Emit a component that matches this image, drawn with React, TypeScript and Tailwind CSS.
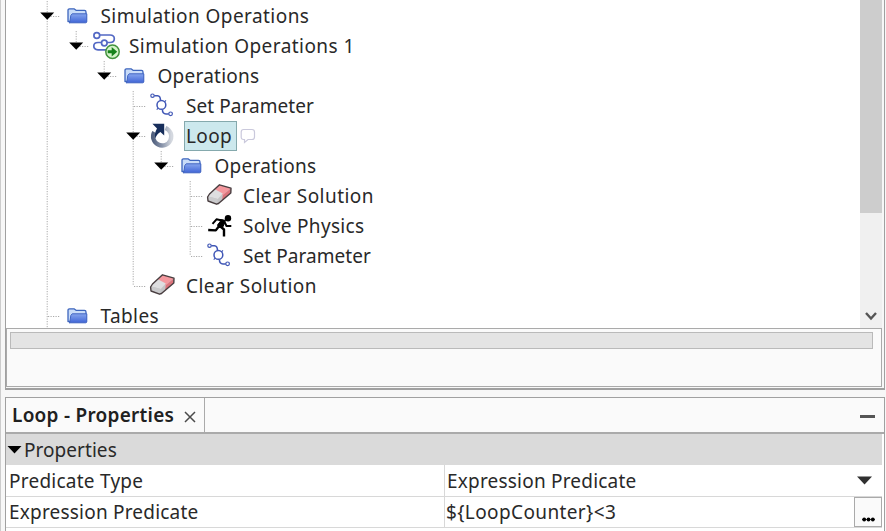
import React from "react";

type Guide = " " | "|" | "+" | "L";
type IconName = "folder" | "sim" | "param" | "loop" | "eraser" | "run";
type Item = { guides: Guide[]; open?: boolean; icon: IconName; label: string; tracking: string; selected?: boolean };

const items: Item[] = [
  { guides: ["+"], open: true, icon: "folder", label: "Simulation Operations", tracking: "tracking-[0.43px]" },
  { guides: ["|", "L"], open: true, icon: "sim", label: "Simulation Operations 1", tracking: "tracking-[0.44px]" },
  { guides: ["|", " ", "L"], open: true, icon: "folder", label: "Operations", tracking: "tracking-[0.24px]" },
  { guides: ["|", " ", " ", "+"], icon: "param", label: "Set Parameter", tracking: "tracking-[0.06px]" },
  { guides: ["|", " ", " ", "+"], open: true, icon: "loop", label: "Loop", tracking: "tracking-[0.35px]", selected: true },
  { guides: ["|", " ", " ", "|", "L"], open: true, icon: "folder", label: "Operations", tracking: "tracking-[0.24px]" },
  { guides: ["|", " ", " ", "|", " ", "+"], icon: "eraser", label: "Clear Solution", tracking: "tracking-[0.45px]" },
  { guides: ["|", " ", " ", "|", " ", "+"], icon: "run", label: "Solve Physics", tracking: "tracking-[0.32px]" },
  { guides: ["|", " ", " ", "|", " ", "L"], icon: "param", label: "Set Parameter", tracking: "tracking-[0.06px]" },
  { guides: ["|", " ", " ", "L"], icon: "eraser", label: "Clear Solution", tracking: "tracking-[0.45px]" },
  { guides: ["+"], icon: "folder", label: "Tables", tracking: "tracking-[0.4px]" },
];

function GuideCell({ kind, open }: { kind: Guide; open: boolean }) {
  return (
    <svg className="h-[30px] w-[28.5px] shrink-0" viewBox="0 0 28.5 30" fill="none" stroke="#aaaaaa" strokeDasharray="1.2 1.3">
      {kind !== " " && <path d={kind === "L" ? "M15.2 0V15" : "M15.2 0V30"} />}
      {(kind === "+" || kind === "L") && <path d="M16 15.5H28.5" />}
      {open && <path d="M8.2 11.5H22.2L15.2 18.8Z" fill="#000" stroke="none" />}
    </svg>
  );
}

function Icon({ name }: { name: IconName }) {
  const box = "h-[30px] w-[31px] shrink-0 overflow-visible";
  switch (name) {
    case "folder":
      return (
        <svg className={box} viewBox="0 0 31 30" strokeLinejoin="round">
          <defs>
            <linearGradient id="fold" x2="0" y2="1"><stop stopColor="#86a5ee" /><stop offset="1" stopColor="#4065d6" /></linearGradient>
          </defs>
          <path d="M7 20.5V9.3Q7 7.8 8.5 7.8H13L15 9.3H23.5Q25 9.3 25 11V20.5Z" fill="#c9dcf8" stroke="#3d65bd" strokeWidth="1.3" />
          <path d="M8.8 21.5L9.8 14.5L11.2 12.8H25.8V20.5Q25.8 21.8 24.6 21.8H8Z" fill="url(#fold)" stroke="#4265c2" />
        </svg>
      );
    case "sim":
      return (
        <svg className={box} viewBox="0 0 31 30" fill="none">
          <g stroke="#5368c4" strokeWidth="1.7">
            <path d="M10.5 4H21Q25.3 4 25.3 7.7T21 11.5H9Q4.8 11.5 4.8 15T9 18.8H17" />
            <circle cx="7.8" cy="4.5" r="2.9" fill="white" /><circle cx="15.3" cy="12" r="2.8" fill="white" />
          </g>
          <circle cx="23.5" cy="20.8" r="6.7" fill="#d4f3c9" stroke="#43933e" strokeWidth="1.5" />
          <path d="M18.7 19.3H22.7V15.9L28.2 20.8L22.7 25.5V22.3H18.7Z" fill="#16821b" />
        </svg>
      );
    case "param":
      return (
        <svg className={box} viewBox="0 0 31 30" fill="none" stroke="#4057b6" strokeWidth="1.5">
          <circle cx="6.5" cy="4.7" r="1.7" strokeWidth="1.2" /><circle cx="24.6" cy="22.8" r="1.8" strokeWidth="1.2" />
          <path d="M8.3 4.7H11.5Q14.6 5 14.4 9.5M22.8 23H20Q16.4 22.8 16.4 18.5" />
          <circle cx="15.4" cy="13.9" r="4.4" />
          <path d="M18.5 10.8L20 9.3M12.2 17.2L10.7 18.7" strokeWidth="1.1" />
        </svg>
      );
    case "loop":
      return (
        <svg className={box} viewBox="0 0 31 30" fill="none">
          <defs><linearGradient id="ring"><stop stopColor="#52617f" /><stop offset=".5" stopColor="#8a95ab" /><stop offset="1" stopColor="#d4d8df" /></linearGradient></defs>
          <path d="M8.2 11A9.1 9.1 0 1 0 19.5 6.9" stroke="url(#ring)" strokeWidth="4.3" />
          <path d="M6.4 2.8H18.2V14.6L14.4 11Q10.5 13 9.4 17.5Q8 12.5 11 7.5Z" fill="#172e5b" />
        </svg>
      );
    case "eraser":
      return (
        <svg className={box} viewBox="0 0 31 30" strokeLinejoin="round">
          <path d="M4.6 16L6.5 13L16.5 3.8L28 7.2L27.8 12L15.5 22.5L13.5 23.2L5 20Z" fill="#c4c4c6" />
          <path d="M11.8 8.2L16.6 4L27.7 7.3L19.8 14.3Z" fill="#f4989e" />
          <path d="M19.8 14.3L27.8 7.5L27.6 12L19 19.2Z" fill="#dc737b" />
          <path d="M4.8 15.3L11.8 8.2L19.8 12.5L14.8 18Z" fill="#dedee0" />
          <path d="M4.8 15.3L14.8 18L14 23L5 20Z" fill="#cacacc" />
          <path d="M4.6 16L6.5 13L16.5 3.8L28 7.2L27.8 12L15.5 22.5L13.5 23.2L5 20Z" fill="none" stroke="#493e40" strokeWidth="1.4" />
        </svg>
      );
    case "run":
      return (
        <svg className={box} viewBox="0 0 31 30" fill="none" stroke="#000" strokeLinejoin="round">
          <circle cx="25" cy="7.3" r="3.2" fill="#000" stroke="none" />
          <path d="M16.5 8.5L22.5 9.3L20 15.8L16 16.5L14.5 14L18 9.5Z" fill="#000" />
          <path d="M20 9.7L13.5 8.3L9.5 12.8M21.5 11L23.5 15H28.3" strokeWidth="2" />
          <path d="M16.5 14.5L12.8 19.4L5.2 19M17.5 15.5L21 18.5V25.5" strokeWidth="2.4" />
        </svg>
      );
  }
}

function Label({ text, tracking }: { text: string; tracking: string }) {
  return <span className={`block whitespace-pre text-[19px] leading-[30px] text-[#292929] ${tracking}`}>{text}</span>;
}

function TreeRow({ item }: { item: Item }) {
  return (
    <div className="flex h-[30px] shrink-0 items-center pl-[26px]">
      {item.guides.map((kind, i) => <GuideCell key={i} kind={kind} open={!!item.open && i === item.guides.length - 1} />)}
      <Icon name={item.icon} />
      {item.selected ? (
        <>
          <div className="ml-[7px] flex h-[30px] w-[53px] items-center border border-[#85a9ad] bg-[#cce8ed] pl-px"><Label text={item.label} tracking={item.tracking} /></div>
          <svg className="ml-[3px] h-[30px] w-[18px]" viewBox="0 0 18 30" fill="none" stroke="#cac9dc" strokeWidth="1.2"><path d="M3.5 8.5H12Q14.5 8.5 14.5 11V16Q14.5 18.5 12 18.5H8L4.5 21.5V18.5H3.5Q1.2 18.5 1.2 16V11Q1.2 8.5 3.5 8.5Z" /></svg>
        </>
      ) : <div className="ml-[9px]"><Label text={item.label} tracking={item.tracking} /></div>}
    </div>
  );
}

export default function App() {
  return (
    <div className="flex h-[531px] w-[886px] flex-col overflow-hidden border-l border-[#cccccc] bg-[#f7f7f7] pl-1 font-['Noto_Sans',sans-serif]">
      <section className="flex h-[390px] w-[880px] shrink-0 flex-col border-x border-b-2 border-[#a0a0a0] bg-[#f7f7f7]">
        <div className="flex h-[328px] shrink-0">
          <div className="flex h-[328px] flex-1 flex-col overflow-hidden bg-white pt-px">
            {items.map((item, i) => <TreeRow key={i} item={item} />)}
          </div>
          <div className="flex w-[22px] flex-col bg-[#f0f0f0]">
            <div className="h-[213px] bg-[#cdcdcd]" />
            <div className="flex flex-1 items-end justify-center pb-[7px]">
              <svg width="12" height="10" viewBox="0 0 12 10" fill="none" stroke="#555" strokeWidth="2.4"><path d="M1 2L6 7.5L11 2" /></svg>
            </div>
          </div>
          <div className="w-[2px] bg-[#f7f7f7]" />
        </div>
        <div className="h-[59px] w-[876px] border border-[#aaaaaa] bg-[#fafafa] px-[3px] pt-[3px]">
          <div className="h-[17px] w-[863px] border border-[#bababa] bg-[#e4e4e4]" />
        </div>
      </section>
      <section className="mt-[7px] flex h-[134px] w-[880px] shrink-0 flex-col border-x border-t border-[#a0a0a0] bg-white">
        <header className="flex h-[36px] shrink-0 items-center justify-between border-b-2 border-[#aaaaaa] bg-[#fafafa] pr-[9px]">
          <div className="flex h-full w-[199px] items-center border-r border-[#aaaaaa] pl-[6px]">
            <span className="w-[162px] whitespace-pre text-[19px] font-semibold leading-[30px] tracking-[0.26px] text-[#202020]">Loop - Properties</span>
            <svg className="ml-[10px] mt-1" width="12" height="12" viewBox="0 0 12 12" stroke="#4a4a4a" strokeWidth="1.5"><path d="M1 1L11 11M11 1L1 11" /></svg>
          </div>
          <div className="mt-[3px] h-[3px] w-[15px] bg-[#555]" />
        </header>
        <div className="mr-[2px] flex h-[31px] shrink-0 items-center bg-[#dadada] pl-[1px]">
          <svg width="15" height="9" viewBox="0 0 15 9"><path d="M0.5 1H14.5L7.5 8.5Z" /></svg>
          <div className="ml-[2px]"><Label text="Properties" tracking="tracking-[0.05px]" /></div>
        </div>
        <div className="mr-[2px] flex h-[32px] shrink-0 border-b border-[#d8d8d8]">
          <div className="flex w-[439px] items-center border-r border-[#d8d8d8] pl-[3px]"><Label text="Predicate Type" tracking="tracking-[0.24px]" /></div>
          <div className="flex flex-1 items-center justify-between pl-[2px] pr-[10px]">
            <Label text="Expression Predicate" tracking="tracking-[0.2px]" />
            <svg width="15" height="9" viewBox="0 0 15 9"><path d="M0 0.5H15L7.5 8.5Z" fill="#303030" /></svg>
          </div>
        </div>
        <div className="mr-[2px] flex h-[31px] shrink-0 border-b border-[#d8d8d8]">
          <div className="flex w-[439px] items-center border-r border-[#d8d8d8] pl-[3px]"><Label text="Expression Predicate" tracking="tracking-[0.2px]" /></div>
          <div className="flex flex-1 items-center justify-between pl-px">
            <Label text="${LoopCounter}<3" tracking="tracking-[0.38px]" />
            <div className="flex h-[30px] w-[28px] items-end justify-center border border-[#aaaaaa] bg-[#fafafa] pb-[4px]">
              <svg width="13" height="5" viewBox="0 0 13 5"><path d="M0 2.5H13" stroke="#000" strokeWidth=".7" /><circle cx="2.2" cy="2.5" r="1.9" /><circle cx="6.5" cy="2.5" r="1.9" /><circle cx="10.8" cy="2.5" r="1.9" /></svg>
            </div>
          </div>
        </div>
      </section>
    </div>
  );
}
